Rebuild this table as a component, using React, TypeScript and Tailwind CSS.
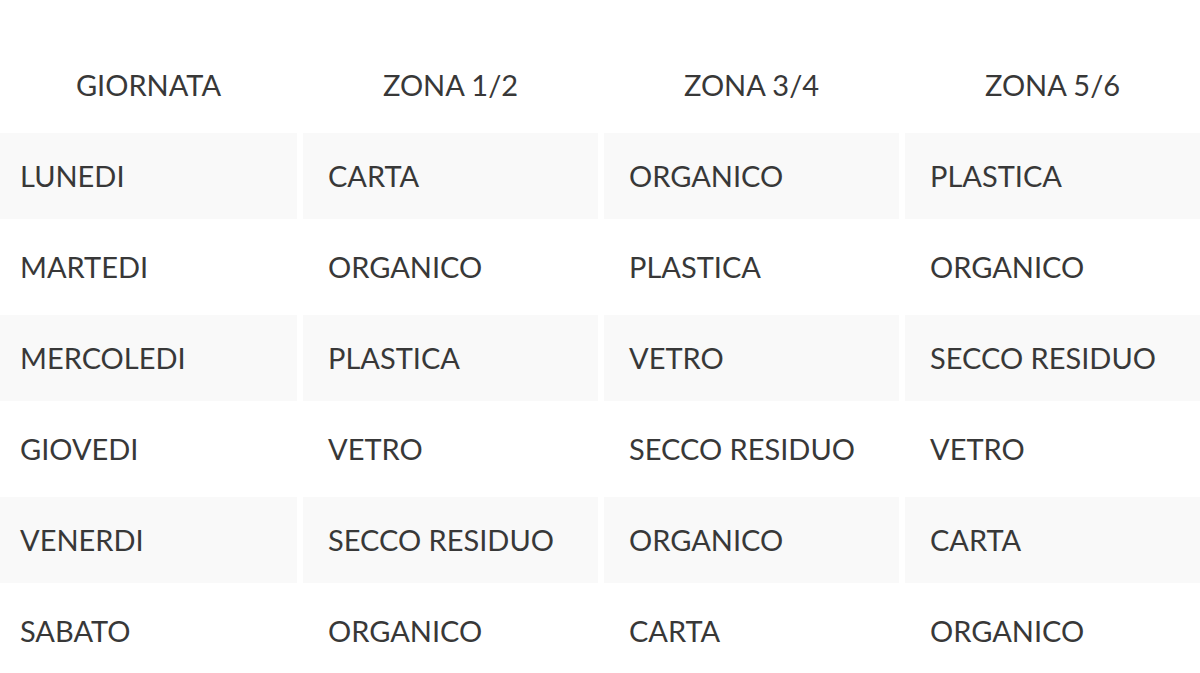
import React from "react";

const header = ["GIORNATA", "ZONA 1/2", "ZONA 3/4", "ZONA 5/6"];
const rows = [
  ["LUNEDI", "CARTA", "ORGANICO", "PLASTICA"],
  ["MARTEDI", "ORGANICO", "PLASTICA", "ORGANICO"],
  ["MERCOLEDI", "PLASTICA", "VETRO", "SECCO RESIDUO"],
  ["GIOVEDI", "VETRO", "SECCO RESIDUO", "VETRO"],
  ["VENERDI", "SECCO RESIDUO", "ORGANICO", "CARTA"],
  ["SABATO", "ORGANICO", "CARTA", "ORGANICO"],
];

export default function App() {
  return (
    <div
      className="w-[1200px] h-[673px] overflow-hidden bg-white text-[#383838] text-[29px]"
      style={{ fontFamily: "Lato, 'Liberation Sans', sans-serif" }}
    >
      <div className="pt-[42px] flex flex-col gap-[5px]">
        <div className="grid grid-cols-[297px_295px_295px_295px] gap-x-[6px] h-[86px]">
          {header.map((h) => (
            <div key={h} className="flex items-center justify-center">
              {h}
            </div>
          ))}
        </div>
        {rows.map((r, i) => (
          <div
            key={i}
            className="grid grid-cols-[297px_295px_295px_295px] gap-x-[6px] h-[86px]"
          >
            {r.map((c, j) => (
              <div
                key={j}
                className={`flex items-center ${j === 0 ? "pl-[20px]" : "pl-[25px]"} ${
                  i % 2 === 0 ? "bg-[#f9f9f9]" : "bg-white"
                }`}
              >
                {c}
              </div>
            ))}
          </div>
        ))}
      </div>
    </div>
  );
}
